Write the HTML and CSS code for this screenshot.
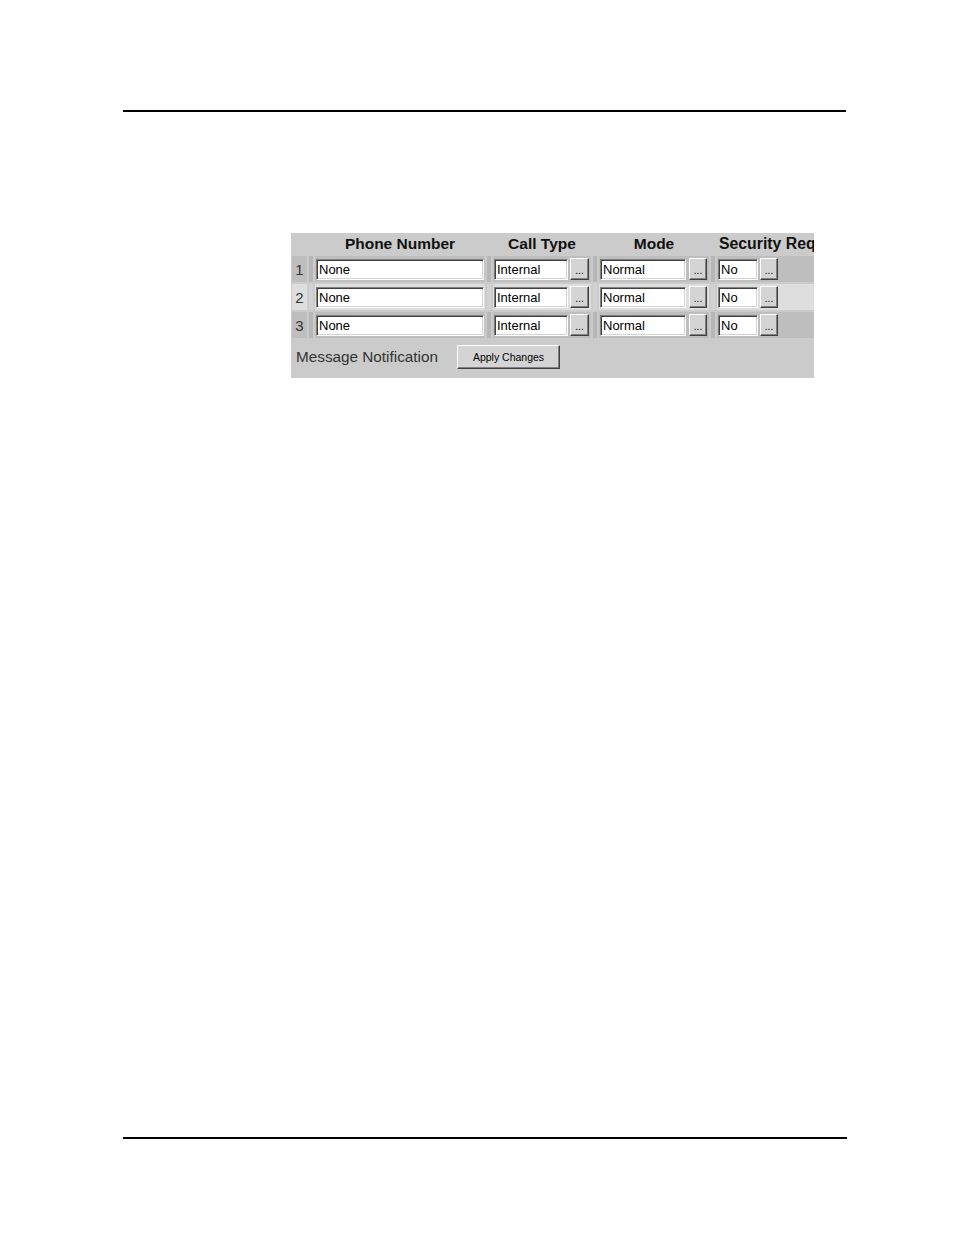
FILE: index.html
```html
<!DOCTYPE html>
<html>
<head>
<meta charset="utf-8">
<link rel="stylesheet" href="styles.css">
</head>
<body>
<div class="page">
  <div class="rule rule-top"></div>
  <div class="panel">
    <div class="hrow">
      <div class="hc c-num"></div>
      <div class="hc c-strip"></div>
      <div class="hc c-phone">Phone Number</div>
      <div class="hc c-strip"></div>
      <div class="hc c-call">Call Type</div>
      <div class="hc c-strip"></div>
      <div class="hc c-mode">Mode</div>
      <div class="hc c-strip"></div>
      <div class="hc c-sec">Security Req</div>
    </div>
    <div class="row odd">
      <div class="cell c-num">1</div>
      <div class="cell c-strip"></div>
      <div class="cell c-phone"><input class="field f-phone" value="None"></div>
      <div class="cell c-strip"></div>
      <div class="cell c-call"><input class="field f-call" value="Internal"><button class="dots">...</button></div>
      <div class="cell c-strip"></div>
      <div class="cell c-mode"><input class="field f-mode" value="Normal"><button class="dots">...</button></div>
      <div class="cell c-strip"></div>
      <div class="cell c-sec"><input class="field f-sec" value="No"><button class="dots">...</button></div>
    </div>
    <div class="row even">
      <div class="cell c-num">2</div>
      <div class="cell c-strip"></div>
      <div class="cell c-phone"><input class="field f-phone" value="None"></div>
      <div class="cell c-strip"></div>
      <div class="cell c-call"><input class="field f-call" value="Internal"><button class="dots">...</button></div>
      <div class="cell c-strip"></div>
      <div class="cell c-mode"><input class="field f-mode" value="Normal"><button class="dots">...</button></div>
      <div class="cell c-strip"></div>
      <div class="cell c-sec"><input class="field f-sec" value="No"><button class="dots">...</button></div>
    </div>
    <div class="row odd">
      <div class="cell c-num">3</div>
      <div class="cell c-strip"></div>
      <div class="cell c-phone"><input class="field f-phone" value="None"></div>
      <div class="cell c-strip"></div>
      <div class="cell c-call"><input class="field f-call" value="Internal"><button class="dots">...</button></div>
      <div class="cell c-strip"></div>
      <div class="cell c-mode"><input class="field f-mode" value="Normal"><button class="dots">...</button></div>
      <div class="cell c-strip"></div>
      <div class="cell c-sec"><input class="field f-sec" value="No"><button class="dots">...</button></div>
    </div>
    <div class="foot">
      <span class="label">Message Notification</span>
      <button class="apply">Apply Changes</button>
    </div>
  </div>
  <div class="rule rule-bottom"></div>
</div>
</body>
</html>
```

FILE: styles.css
```css
html, body {
  margin: 0;
  padding: 0;
  background: #ffffff;
}

body {
  font-family: "Liberation Sans", Arial, sans-serif;
  color: #000;
}

.page {
  width: 954px;
  height: 1235px;
  padding-top: 110px;
  box-sizing: border-box;
}

.rule {
  height: 2px;
  background: #000;
  margin-left: 123px;
}

.rule-top {
  width: 723px;
}

.rule-bottom {
  width: 724px;
  margin-top: 759px;
}

.panel {
  margin-top: 121px;
  margin-left: 291px;
  width: 523px;
  height: 145px;
  background: #cbcbcb;
  overflow: hidden;
  display: flex;
  flex-direction: column;
  gap: 2px;
}

.hrow,
.row {
  display: flex;
  gap: 2px;
  padding-left: 1px;
  white-space: nowrap;
}

.hrow {
  height: 21px;
  align-items: center;
}

.hc {
  font-weight: bold;
  font-size: 15.5px;
  color: #111;
  text-align: center;
  padding-top: 1px;
}

.row {
  height: 26px;
}

.cell {
  display: flex;
  align-items: center;
  height: 26px;
}

.c-num { width: 15px; flex: none; justify-content: center; font-size: 15px; color: #333; }
.c-strip { width: 4px; flex: none; }
.c-phone { width: 170px; flex: none; justify-content: center; }
.c-call { width: 98px; flex: none; justify-content: center; }
.c-mode { width: 110px; flex: none; justify-content: center; }
.c-sec { flex: 1; justify-content: flex-start; }

.hc.c-sec { text-align: left; padding-left: 2px; font-size: 15.8px; }

.row .c-phone,
.row .c-call,
.row .c-mode,
.row .c-sec {
  justify-content: flex-start;
  padding-left: 1px;
  box-sizing: border-box;
}

.row.odd .cell { background: #bebebe; }
.row.odd .c-strip { background: #b6b6b6; }
.row.even .cell { background: #dedede; }
.row.even .c-strip { background: #d2d2d2; }

.field {
  box-sizing: border-box;
  height: 21px;
  margin: 0;
  padding: 0 0 0 2px;
  background: #ffffff;
  border-top: 1px solid #808080;
  border-left: 1px solid #808080;
  border-bottom: 1px solid #ffffff;
  border-right: 1px solid #ffffff;
  box-shadow: inset 1px 1px 0 #404040, inset -1px -1px 0 #d4d4d4;
  font-family: "Liberation Sans", Arial, sans-serif;
  font-size: 13px;
  color: #000;
  outline: none;
}

.f-phone { width: 168px; }
.f-call { width: 74px; }
.f-mode { width: 86px; }
.f-sec { width: 40px; }

.dots {
  box-sizing: border-box;
  width: 19px;
  height: 22px;
  margin: 0 0 0 2px;
  padding: 0 0 3px 0;
  background: #d4d4d4;
  border-top: 1px solid #ffffff;
  border-left: 1px solid #ffffff;
  border-bottom: 1px solid #404040;
  border-right: 1px solid #404040;
  box-shadow: inset -1px -1px 0 #808080;
  font-family: "Liberation Sans", Arial, sans-serif;
  font-size: 10px;
  line-height: 10px;
  color: #000;
  display: flex;
  align-items: flex-end;
  justify-content: center;
}

.c-mode .dots { margin-left: 3px; width: 18px; }
.c-sec .dots { margin-left: 2px; width: 18px; }

.foot {
  height: 33px;
  display: flex;
  align-items: center;
  padding-left: 5px;
}

.label {
  font-size: 15.3px;
  color: #333;
}

.apply {
  box-sizing: border-box;
  margin: 0 0 0 19px;
  width: 103px;
  height: 24px;
  padding: 0;
  background: #d4d4d4;
  border-top: 1px solid #ffffff;
  border-left: 1px solid #ffffff;
  border-bottom: 1px solid #404040;
  border-right: 1px solid #404040;
  box-shadow: inset -1px -1px 0 #808080;
  font-family: "Liberation Sans", Arial, sans-serif;
  font-size: 10.5px;
  color: #000;
}
```
